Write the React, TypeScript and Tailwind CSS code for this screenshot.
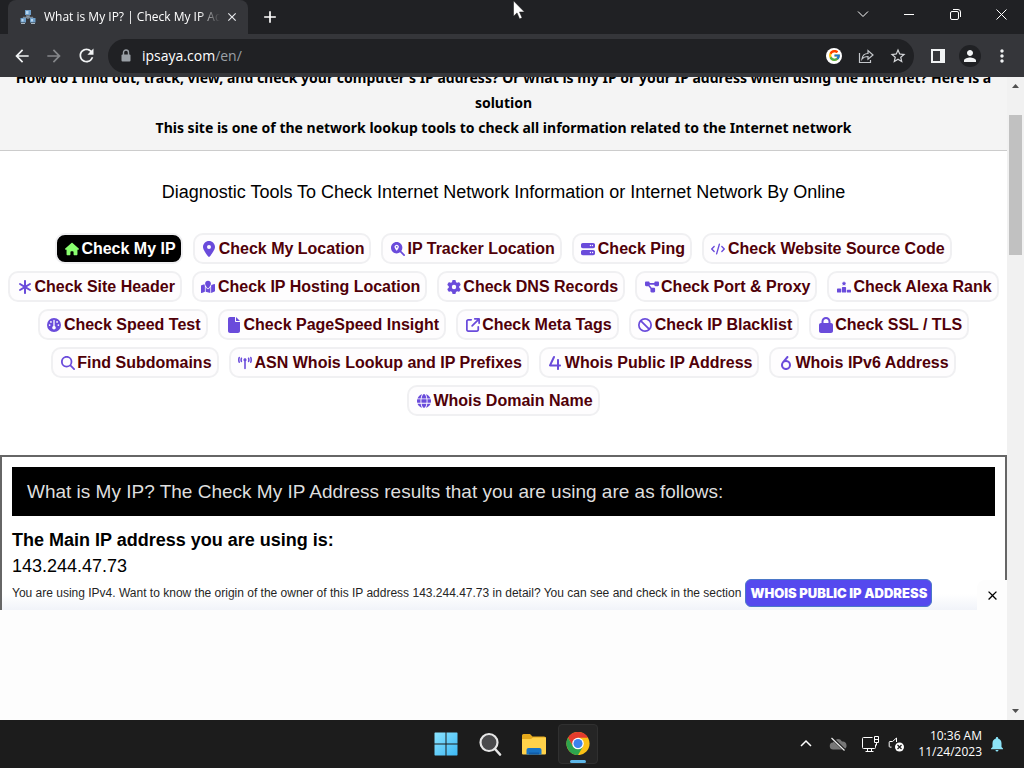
import type { ReactNode } from "react";
import { FcGoogle } from "react-icons/fc";
import {
  Fa4, Fa6, FaArrowUpRightFromSquare, FaAsterisk, FaBan, FaCode, FaDiagramProject, FaFile, FaGauge,
  FaGear, FaGlobe, FaHouse, FaLocationDot, FaLock, FaMagnifyingGlass, FaMagnifyingGlassLocation,
  FaMapLocation, FaRankingStar, FaServer, FaTowerBroadcast,
} from "react-icons/fa6";
import {
  MdArrowBack, MdArrowForward, MdRefresh, MdStarBorder, MdMoreVert, MdPerson, MdClose, MdAdd,
  MdNotifications,
} from "react-icons/md";

const tools = [
  { label: "Check My IP", Icon: FaHouse, active: true },
  { label: "Check My Location", Icon: FaLocationDot },
  { label: "IP Tracker Location", Icon: FaMagnifyingGlassLocation },
  { label: "Check Ping", Icon: FaServer },
  { label: "Check Website Source Code", Icon: FaCode },
  { label: "Check Site Header", Icon: FaAsterisk },
  { label: "Check IP Hosting Location", Icon: FaMapLocation },
  { label: "Check DNS Records", Icon: FaGear },
  { label: "Check Port & Proxy", Icon: FaDiagramProject },
  { label: "Check Alexa Rank", Icon: FaRankingStar },
  { label: "Check Speed Test", Icon: FaGauge },
  { label: "Check PageSpeed Insight", Icon: FaFile },
  { label: "Check Meta Tags", Icon: FaArrowUpRightFromSquare },
  { label: "Check IP Blacklist", Icon: FaBan },
  { label: "Check SSL / TLS", Icon: FaLock },
  { label: "Find Subdomains", Icon: FaMagnifyingGlass },
  { label: "ASN Whois Lookup and IP Prefixes", Icon: FaTowerBroadcast },
  { label: "Whois Public IP Address", Icon: Fa4 },
  { label: "Whois IPv6 Address", Icon: Fa6 },
  { label: "Whois Domain Name", Icon: FaGlobe },
];

function IconButton({ label, className, children }: { label: string; className: string; children: ReactNode }) {
  return (
    <button aria-label={label} className={`flex shrink-0 items-center justify-center ${className}`}>
      {children}
    </button>
  );
}

function TabStrip() {
  return (
    <div className="relative flex h-[34px] items-center bg-[#202124] text-[#e8eaed]">
      <div className="ml-2 flex h-full w-60 items-center rounded-t-lg bg-[#35363a] pl-3 pr-1">
        <svg viewBox="0 0 16 16" className="h-4 w-4 shrink-0" aria-hidden="true">
          <path d="M8 7v3M3.5 10V8.500h9V10" stroke="#7d8c99" strokeWidth="1.300" fill="none" />
          <path d="M5 1h6v5H5zM.5 9H6v4.500H.5zM10 9h5.500v4.500H10z" fill="#6f9fca" />
          <path d="M6 2h2.500v3H6zM1.500 10h2v2.500h-2zM11 10h2v2.500h-2z" fill="#b9d6ee" />
          <path d="M6 7h4M1 14.500h4M11 14.500h4" stroke="#a9b6c1" />
        </svg>
        <span className="ml-2 w-44 overflow-hidden whitespace-nowrap font-['Open_Sans',sans-serif] text-xs text-white [mask-image:linear-gradient(to_right,black_88%,transparent)]">
          What is My IP? | Check My IP Address
        </span>
        <IconButton label="Close tab" className="h-6 w-6"><MdClose size={14} /></IconButton>
      </div>
      <IconButton label="New tab" className="ml-2 h-7 w-7 text-white"><MdAdd size={20} /></IconButton>
      <div className="ml-auto flex h-7 items-center self-start text-white">
        <IconButton label="Search tabs" className="h-full w-[46px]">
          <svg width="12" height="12" viewBox="0 0 12 12" fill="none" stroke="currentColor"><path d="m1 3.500 5 5 5-5" /></svg>
        </IconButton>
        <IconButton label="Minimize" className="h-full w-[46px]">
          <svg width="10" height="10" viewBox="0 0 10 10" stroke="currentColor"><path d="M0 5.500h10" /></svg>
        </IconButton>
        <IconButton label="Restore" className="h-full w-[46px]">
          <svg width="11" height="11" viewBox="0 0 11 11" fill="none" stroke="currentColor">
            <rect x=".5" y="2.500" width="8" height="8" rx="1.500" /><path d="M3 .5h5a2.500 2.500 0 0 1 2.500 2.500v5" />
          </svg>
        </IconButton>
        <IconButton label="Close window" className="h-full w-[46px]">
          <svg width="11" height="11" viewBox="0 0 11 11" stroke="currentColor"><path d="m.5.5 10 10M10.500.5l-10 10" /></svg>
        </IconButton>
      </div>
      <svg className="absolute left-1/2 top-0 h-5 w-3.5" viewBox="0 0 14 20" aria-hidden="true">
        <path d="M1.500.8v15.500l3.500-3.400 2.600 6 2.500-1.100-2.600-5.800h5z" fill="white" stroke="#111" strokeWidth=".5" />
      </svg>
    </div>
  );
}

function Toolbar() {
  return (
    <div className="flex h-[43px] items-center bg-[#35363a] text-[#f1f3f4]">
      <IconButton label="Back" className="ml-2 h-7 w-7"><MdArrowBack size={20} /></IconButton>
      <IconButton label="Forward" className="ml-1 h-7 w-7 text-[#85878a]"><MdArrowForward size={20} /></IconButton>
      <IconButton label="Reload" className="ml-1 h-7 w-7"><MdRefresh size={21} /></IconButton>
      <div className="ml-2 flex h-[34px] min-w-0 flex-1 items-center rounded-full bg-[#202124] pl-3">
        <svg width="12" height="14" viewBox="0 0 12 14" className="shrink-0 text-[#9aa0a6]" aria-hidden="true">
          <path d="M3.500 6V3.500a2.500 2.500 0 0 1 5 0V6" fill="none" stroke="currentColor" strokeWidth="1.400" />
          <rect x="1.500" y="5.500" width="9" height="7" rx="1" fill="currentColor" />
        </svg>
        <div className="ml-2.5 flex-1 font-['Open_Sans',sans-serif] text-sm text-white">
          ipsaya.com<span className="text-[#9aa0a6]">/en/</span>
        </div>
        <IconButton label="Google" className="h-8 w-8">
          <span className="flex h-4 w-4 items-center justify-center rounded-full bg-white"><FcGoogle size={13} /></span>
        </IconButton>
        <IconButton label="Share" className="h-8 w-8 text-[#c4c7cb]">
          <svg width="16" height="16" viewBox="0 0 16 16" fill="none" stroke="currentColor" strokeWidth="1.200">
            <path d="M1.500 5v9.500h11V12M4 11c.5-4 2.500-5.500 6-5.500V2.500L15 7l-5 4.300V8.500C7 8.500 5.500 9 4 11z" />
          </svg>
        </IconButton>
        <IconButton label="Bookmark" className="h-8 w-8 text-[#d5d7da]"><MdStarBorder size={18} /></IconButton>
      </div>
      <IconButton label="Side panel" className="ml-2 h-8 w-8">
        <svg width="14" height="14" viewBox="0 0 14 14"><path fill="currentColor" fillRule="evenodd" d="M0 0h14v14H0zM2 2v10h7V2z" /></svg>
      </IconButton>
      <IconButton label="Profile" className="h-8 w-8">
        <span className="flex h-[22px] w-[22px] items-center justify-center rounded-full bg-[#202124]"><MdPerson size={18} /></span>
      </IconButton>
      <IconButton label="Browser menu" className="mr-1.5 h-8 w-8"><MdMoreVert size={20} /></IconButton>
    </div>
  );
}

function Page() {
  return (
    <main className="relative min-w-0 flex-1 overflow-hidden bg-white font-['Liberation_Sans',Arial,sans-serif] text-black">
      <header className="h-[74px] overflow-hidden border-b border-[#ccc] bg-[#f4f4f4] text-center font-['Noto_Sans',sans-serif] text-sm font-bold">
        <div className="-mt-3 leading-[25px]">
          <p>How do I find out, track, view, and check your computer's IP address? Or what is my IP or your IP address when using the Internet? Here is a solution</p>
          <p>This site is one of the network lookup tools to check all information related to the Internet network</p>
        </div>
      </header>
      <h1 className="pt-7 text-center text-lg leading-[26px]">
        Diagnostic Tools To Check Internet Network Information or Internet Network By Online
      </h1>
      <nav className="mt-7 flex flex-wrap justify-center gap-x-2.5 gap-y-[7px]">
        {tools.map(({ label, Icon, active }) => (
          <a
            key={label}
            href="#"
            className={`flex h-[31px] items-center rounded-[10px] border-2 border-[#f0f0f2] pl-[7px] pr-[5px] text-base font-bold ${active ? "bg-black text-white" : "bg-[#fefdfe] text-[#500008]"}`}
          >
            <span className={`flex w-[15px] justify-center ${active ? "text-[#8aff70]" : "text-[#6a4bdb]"}`}>
              <Icon className="h-4 w-3.5" />
            </span>
            <span className="ml-0.5 whitespace-nowrap">{label}</span>
          </a>
        ))}
      </nav>
      <section className="mt-[39px] border-2 border-b-0 border-[#666] px-2.5 pt-2.5">
        <h2 className="bg-black px-[15px] text-[19px] leading-[49px] text-[#dedede]">
          What is My IP? The Check My IP Address results that you are using are as follows:
        </h2>
        <h3 className="mt-2.5 text-lg font-bold leading-7">The Main IP address you are using is:</h3>
        <p className="text-lg leading-[25px]">143.244.47.73</p>
        <p className="flex h-40 items-start text-xs leading-7 text-[#222]">
          You are using IPv4. Want to know the origin of the owner of this IP address 143.244.47.73 in detail? You can see and check in the section
          <a href="#" className="relative z-20 ml-1 rounded-md border border-[#4b78c8] bg-[#5549ee] px-1 font-['Inter',sans-serif] text-[13px] font-black leading-[26px] text-white">
            WHOIS PUBLIC IP ADDRESS
          </a>
        </p>
      </section>
      <aside aria-label="Advertisement" className="absolute inset-x-0 bottom-0 z-10 h-[110px] bg-[#fdfdfd]">
        <div className="absolute inset-x-0 bottom-full flex h-[30px] items-end">
          <div className="ml-0.5 h-4 flex-1 bg-gradient-to-t from-[#e8ecf5]/60 to-transparent" />
          <IconButton label="Close advertisement" className="h-[30px] w-[30px] rounded-tl-lg bg-[#fdfdfd] text-black"><MdClose size={15} /></IconButton>
        </div>
      </aside>
    </main>
  );
}

function Scrollbar() {
  return (
    <div className="flex w-[17px] shrink-0 flex-col items-center bg-[#f1f1f1] text-[#505050]">
      <svg width="17" height="17" viewBox="0 0 17 17" aria-hidden="true"><path d="M5 11h7L8.500 7z" fill="currentColor" /></svg>
      <div className="mt-[21px] h-[140px] w-[13px] bg-[#c1c1c1]" />
      <svg className="mt-auto" width="17" height="17" viewBox="0 0 17 17" aria-hidden="true"><path d="M5 6h7l-3.500 4z" fill="currentColor" /></svg>
    </div>
  );
}

function Taskbar() {
  return (
    <footer className="grid h-12 shrink-0 grid-cols-[1fr_auto_1fr] items-center bg-[#1c1c1c] text-white">
      <div />
      <div className="flex items-center">
        <IconButton label="Start" className="h-12 w-11">
          <svg width="24" height="24" viewBox="0 0 24 24">
            <defs>
              <linearGradient id="start" x1="0" y1="0" x2="1" y2="1"><stop stopColor="#8be4ff" /><stop offset="1" stopColor="#3db8f5" /></linearGradient>
            </defs>
            <path d="M1 .5h10.500v11H.5V1zM12.500.5H23l.5.5v10.500h-11zM.5 12.500h11v11H1L.5 23zM12.500 12.500h11V23l-.5.500H12.500z" fill="url(#start)" />
          </svg>
        </IconButton>
        <IconButton label="Search" className="h-12 w-11">
          <svg width="24" height="24" viewBox="0 0 24 24">
            <circle cx="11" cy="10.500" r="8.500" fill="#4a4a4c" stroke="#e6e6e6" strokeWidth="2.200" />
            <path d="m17 17 5 5.500" stroke="#e6e6e6" strokeWidth="2.600" strokeLinecap="round" />
          </svg>
        </IconButton>
        <IconButton label="File Explorer" className="h-12 w-11">
          <svg width="26" height="24" viewBox="0 0 26 24">
            <path d="M1 3.500Q1 2 2.500 2H9l2.500 2.500H23Q25 4.500 25 6v4H1z" fill="#e5a91c" />
            <path d="M1 7h9l2-1.500h13v16q0 1-1 1H2q-1 0-1-1z" fill="#ffd24a" />
            <path d="M5.500 22.500V18q0-2 2-2h11q2 0 2 2v4.500z" fill="#1874c6" />
            <path d="M8 22.500v-2h10v2z" fill="#115ca8" />
          </svg>
        </IconButton>
        <div className="flex h-12 w-11 items-center justify-center">
          <button aria-label="Google Chrome" className="flex h-10 w-10 flex-col items-center rounded border border-[#303030] bg-[#252525] pt-[7px]">
            <svg width="24" height="24" viewBox="0 0 24 24">
              <circle cx="12" cy="12" r="12" fill="#fbc116" />
              <path d="M1.600 6A12 12 0 0 1 22.400 6H12L6.800 15z" fill="#e33b2e" />
              <path d="M1.600 6A12 12 0 0 0 12 24l5.200-9H6.800z" fill="#2da44e" />
              <circle cx="12" cy="12" r="6" fill="white" />
              <circle cx="12" cy="12" r="4.700" fill="#3c82ed" />
            </svg>
            <span className="mt-[5px] h-[3px] w-4 rounded-full bg-[#5db7e8]" />
          </button>
        </div>
      </div>
      <div className="flex items-center justify-end pr-[18px]">
        <IconButton label="Show hidden icons" className="h-8 w-8">
          <svg width="12" height="12" viewBox="0 0 12 12" fill="none" stroke="currentColor" strokeWidth="1.500"><path d="m1 8 5-5 5 5" /></svg>
        </IconButton>
        <IconButton label="OneDrive" className="h-8 w-8">
          <svg width="18" height="16" viewBox="0 0 18 16">
            <path d="M4.500 13.500a3.500 3.500 0 0 1-.5-7 5 5 0 0 1 9-1 4 4 0 0 1 1 8z" fill="#777" />
            <path d="m3 2 13 12.500" stroke="#1c1c1c" strokeWidth="3" /><path d="m2.500 2 13 12.500" stroke="#eee" strokeWidth="1.200" />
          </svg>
        </IconButton>
        <IconButton label="Network" className="h-8 w-8">
          <svg width="17" height="17" viewBox="0 0 17 17" fill="none" stroke="currentColor">
            <path d="M10.500 1.500h-9q-1 0-1 1v9q0 1 1 1h11q1 0 1-1V8.500M5.500 12.500v3M9.500 12.500v3M3.500 15.500h8" /><path d="M12.500.5h4v6h-4zM12.500 3.500h4M14.500 6.500v3" />
          </svg>
        </IconButton>
        <IconButton label="Volume muted" className="h-8 w-5">
          <svg width="17" height="17" viewBox="0 0 17 17">
            <path d="M8.500 6V2L4.500 5.500H2q-.8 0-.8.8v4q0 .8.8.8h1.500" fill="none" stroke="currentColor" />
            <circle cx="11.500" cy="11" r="4.500" fill="white" /><path d="m9.500 9 4 4M13.500 9l-4 4" stroke="#1c1c1c" strokeWidth="1.200" />
          </svg>
        </IconButton>
        <div className="ml-3 text-right font-['Open_Sans',sans-serif] text-xs leading-4">
          <p>10:36 AM</p>
          <p>11/24/2023</p>
        </div>
        <IconButton label="Notifications" className="ml-1.5 h-8 w-[18px] text-[#8ce4f8]"><MdNotifications size={18} /></IconButton>
      </div>
    </footer>
  );
}

export default function App() {
  return (
    <div className="flex h-screen flex-col overflow-hidden bg-white">
      <TabStrip />
      <Toolbar />
      <div className="flex min-h-0 flex-1">
        <Page />
        <Scrollbar />
      </div>
      <Taskbar />
    </div>
  );
}
